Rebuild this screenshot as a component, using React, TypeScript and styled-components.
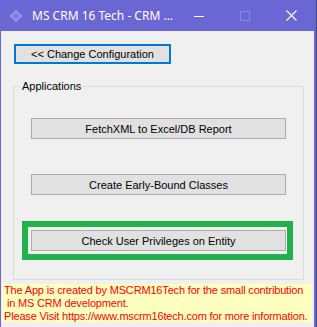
import * as React from "react";
import styled, { createGlobalStyle } from "styled-components";

const GlobalStyle = createGlobalStyle`
  html, body {
    margin: 0;
    padding: 0;
    background: #3d4b7e;
  }
`;

const Window = styled.div`
  width: 313px;
  height: 327px;
  border-left: 1px solid #6a66d4;
  border-right: 2px solid #6a66d4;
  background: #f0f0f0;
  display: flex;
  flex-direction: column;
  overflow: hidden;
  font-family: "Liberation Sans", Arial, sans-serif;
  font-size: 11px;
  color: #000;
`;

const TitleBar = styled.div`
  height: 31px;
  flex: none;
  background: #6a66d4;
  display: flex;
  align-items: center;
  color: #fff;
`;

const AppIcon = styled.svg`
  width: 14px;
  height: 14px;
  margin: 0 9px 0 8px;
  flex: none;
`;

const Title = styled.div`
  font-family: "Noto Sans", "Open Sans", sans-serif;
  font-size: 12px;
  flex: 1;
  white-space: nowrap;
  margin-top: -1px;
`;

const Caption = styled.div`
  width: 46px;
  height: 31px;
  display: flex;
  align-items: center;
  justify-content: center;
  flex: none;
  svg {
    display: block;
  }
`;

const Body = styled.div`
  flex: 1;
  display: flex;
  flex-direction: column;
  padding: 13px 0 0 0;
`;

const ConfigButton = styled.button`
  margin-left: 13px;
  width: 157px;
  height: 20px;
  border: 2px solid #0078d7;
  background: #e1e1e1;
  font-family: inherit;
  font-size: 11px;
  color: #000;
  padding: 0;
  line-height: 14px;
`;

const Group = styled.fieldset`
  margin: 16px 0 0 12px;
  width: 291px;
  height: 200px;
  border: 1px solid #dcdcdc;
  padding: 16px 0 0 8px;
  box-sizing: border-box;
  display: flex;
  flex-direction: column;
  gap: 17px;
`;

const Legend = styled.legend`
  margin-left: -2px;
  padding: 0 2px;
  font-size: 11px;
  line-height: 13px;
`;

const ButtonFrame = styled.div<{ $highlight?: boolean }>`
  width: fit-content;
  padding: 3px 1px 3px 3px;
  border: 6px solid ${(p) => (p.$highlight ? "#22b14c" : "transparent")};
`;

const AppButton = styled.button`
  display: block;
  width: 255px;
  height: 21px;
  border: 1px solid #adadad;
  background: #e1e1e1;
  font-family: inherit;
  font-size: 11px;
  color: #000;
  padding: 0;
  line-height: 14px;
`;

const Credits = styled.div`
  margin: 4px 0 0 1px;
  width: 310px;
  height: 38px;
  background: #ffffc0;
  color: #ff0000;
  padding: 0 0 0 2px;
  font-size: 11px;
  letter-spacing: -0.17px;
  line-height: 13px;
  white-space: pre;
  box-sizing: border-box;
`;

const buttons = [
  { label: "FetchXML to Excel/DB Report" },
  { label: "Create Early-Bound Classes" },
  { label: "Check User Privileges on Entity", highlight: true },
];

export default function App() {
  return (
    <>
      <GlobalStyle />
      <Window>
        <TitleBar>
          <AppIcon viewBox="0 0 14 14">
            <path d="M7 1 L13 7 L7 13 L1 7 Z" fill="#8484e0" stroke="#9c9cec" strokeWidth="1" />
            <path d="M7 4 L10 7 L7 10 L4 7 Z" fill="#7474d8" stroke="#a4a4ee" strokeWidth="0.8" />
          </AppIcon>
          <Title>MS CRM 16 Tech - CRM ...</Title>
          <Caption>
            <svg width="10" height="10" viewBox="0 0 10 10">
              <line x1="0" y1="5.5" x2="10" y2="5.5" stroke="#fff" strokeWidth="1" />
            </svg>
          </Caption>
          <Caption>
            <svg width="10" height="10" viewBox="0 0 10 10">
              <rect x="0.5" y="0.5" width="9" height="9" fill="none" stroke="#8d8ae2" strokeWidth="1" />
            </svg>
          </Caption>
          <Caption>
            <svg width="11" height="11" viewBox="0 0 11 11">
              <path d="M0.5 0.5 L10.5 10.5 M10.5 0.5 L0.5 10.5" stroke="#fff" strokeWidth="1.1" />
            </svg>
          </Caption>
        </TitleBar>
        <Body>
          <ConfigButton>&lt;&lt; Change Configuration</ConfigButton>
          <Group>
            <Legend>Applications</Legend>
            {buttons.map((b) => (
              <ButtonFrame key={b.label} $highlight={b.highlight}>
                <AppButton>{b.label}</AppButton>
              </ButtonFrame>
            ))}
          </Group>
          <Credits>
            {"The App is created by MSCRM16Tech for the small contribution\n in MS CRM development.\nPlease Visit https://www.mscrm16tech.com for more information."}
          </Credits>
        </Body>
      </Window>
    </>
  );
}
